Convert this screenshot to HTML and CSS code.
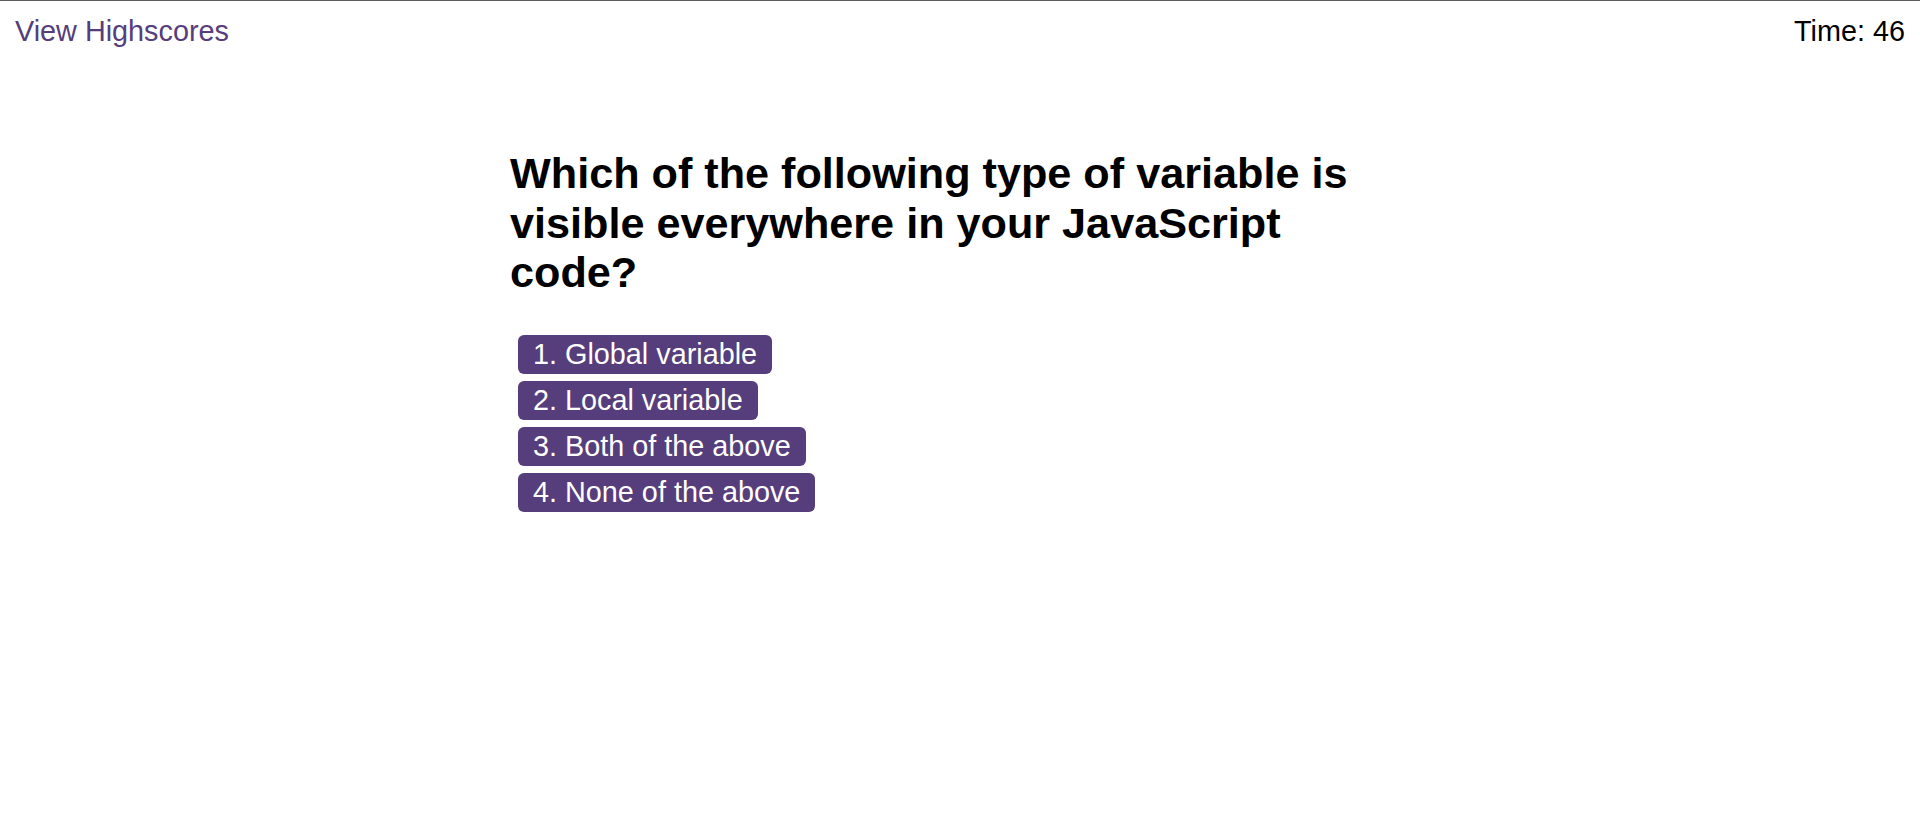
FILE: index.html
```html
<!DOCTYPE html>
<html lang="en">
<head>
<meta charset="utf-8">
<title>Code Quiz</title>
<link rel="stylesheet" href="styles.css">
</head>
<body>
<header class="topbar">
  <a class="highscores" href="#">View Highscores</a>
  <div class="timer">Time: 46</div>
</header>
<main class="quiz">
  <h1 class="question">Which of the following type of variable is visible everywhere in your JavaScript code?</h1>
  <div class="choices">
    <button class="choice">1. Global variable</button>
    <button class="choice">2. Local variable</button>
    <button class="choice">3. Both of the above</button>
    <button class="choice">4. None of the above</button>
  </div>
</main>
</body>
</html>
```

FILE: styles.css
```css
html, body {
  margin: 0;
  padding: 0;
  background: #ffffff;
}

body {
  font-family: "Liberation Sans", Arial, sans-serif;
  color: #000000;
}

.topbar {
  border-top: 1px solid #5c5c5c;
  display: flex;
  justify-content: space-between;
  align-items: flex-start;
  padding: 14px 15px 0 15px;
  font-size: 28.8px;
  line-height: 33px;
}

.highscores {
  color: #563d7c;
  text-decoration: none;
}

.timer {
  color: #000000;
}

.quiz {
  width: 900px;
  margin: 101px auto 0 auto;
}

.question {
  margin: 0;
  max-width: 870px;
  font-size: 43.2px;
  font-weight: bold;
  line-height: 49.7px;
}

.choices {
  display: flex;
  flex-direction: column;
  align-items: flex-start;
  gap: 7.3px;
  margin: 37px 0 0 8px;
}

.choice {
  background: #563d7c;
  color: #ffffff;
  border: none;
  border-radius: 6px;
  font-family: "Liberation Sans", Arial, sans-serif;
  font-size: 28.8px;
  line-height: 33px;
  padding: 3px 15px 2.7px 15px;
  cursor: pointer;
}
```
